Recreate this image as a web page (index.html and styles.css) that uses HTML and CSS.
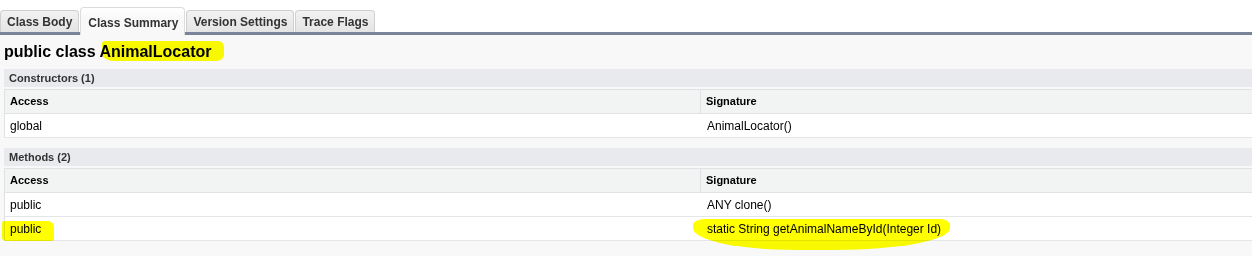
FILE: index.html
```html
<!DOCTYPE html>
<html>
<head>
<meta charset="utf-8">
<link rel="stylesheet" href="styles.css">
</head>
<body>
<div class="tabs">
  <div class="tab">Class Body</div>
  <div class="tab active">Class Summary</div>
  <div class="tab">Version Settings</div>
  <div class="tab">Trace Flags</div>
</div>
<div class="content">
  <h2 class="title">public class <span class="hl hl-title">AnimalLocator</span></h2>

  <div class="section">Constructors (1)</div>
  <div class="table">
    <div class="row head"><div class="cell c1">Access</div><div class="cell">Signature</div></div>
    <div class="row"><div class="cell c1">global</div><div class="cell">AnimalLocator()</div></div>
  </div>

  <div class="section gap">Methods (2)</div>
  <div class="table">
    <div class="row head"><div class="cell c1">Access</div><div class="cell">Signature</div></div>
    <div class="row"><div class="cell c1">public</div><div class="cell">ANY clone()</div></div>
    <div class="row"><div class="cell c1"><span class="hl hl-pub">public</span></div><div class="cell"><span class="hl hl-sig">static String getAnimalNameById(Integer Id)</span></div></div>
  </div>
</div>
</body>
</html>
```
FILE: styles.css
```css
html {
  overflow: hidden;
  background: #f8f8f8;
}

body {
  margin: 0;
  padding: 0;
  min-height: 256px;
  background: #f8f8f8;
  font-family: "Liberation Sans", Arial, sans-serif;
  color: #000;
}

.tabs {
  display: flex;
  align-items: flex-end;
  height: 32px;
  background: #fff;
  border-bottom: 3px solid #7b8399;
}

.tab {
  box-sizing: border-box;
  height: 22px;
  padding: 1px 6px 0 6px;
  margin-right: 1px;
  border: 1px solid #cfcfcf;
  border-bottom: none;
  border-radius: 4px 4px 0 0;
  background: linear-gradient(#f2f2f2, #e4e4e4);
  font-size: 12px;
  font-weight: bold;
  line-height: 20px;
  color: #333;
  white-space: nowrap;
}

.tab.active {
  height: 28px;
  margin-bottom: -3px;
  padding-top: 5px;
  background: linear-gradient(#ffffff, #f8f8f8 40%);
  border-color: #dcdcdc;
  position: relative;
  z-index: 1;
  padding-left: 7px;
  padding-right: 6px;
}

.content {
  padding: 7px 0 0 4px;
}

.title {
  margin: 0 0 7px 0;
  font-size: 16px;
  font-weight: bold;
  line-height: 20px;
  color: #000;
}

.section {
  height: 18px;
  line-height: 18px;
  padding-left: 5px;
  background: #e9eaee;
  font-size: 11px;
  font-weight: bold;
  color: #333;
  margin-bottom: 2px;
}

.section.gap {
  margin-top: 10px;
}

.table {
  border: 1px solid #dfe2e4;
  border-right: none;
  border-bottom: none;
  background: #fff;
  margin-right: -10px;
}

.row {
  display: grid;
  grid-template-columns: 696px 1fr;
  height: 24px;
  box-sizing: border-box;
  border-bottom: 1px solid #e3e5e6;
}

.row.head {
  background: #f2f3f3;
  border-bottom: 1px solid #e0e3e5;
}

.cell {
  padding-left: 5px;
  padding-top: 1px;
  font-size: 12px;
  line-height: 23px;
  color: #000;
  white-space: nowrap;
}

.row.head .cell {
  padding-top: 0;
  font-size: 11px;
  font-weight: bold;
  line-height: 23px;
}

.row.head .c1 {
  border-right: 1px solid #e0e3e5;
}

.row:not(.head) .c1 + .cell {
  padding-left: 6px;
}

.hl {
  position: relative;
}

.hl::after {
  content: "";
  position: absolute;
  background: #ffff00;
  mix-blend-mode: multiply;
  pointer-events: none;
}

.hl-title::after {
  left: 3px;
  right: -13px;
  top: -2px;
  bottom: -1px;
  border-radius: 3px 6px 8px 12px / 3px 6px 6px 8px;
}

.hl-pub::after {
  left: -8px;
  right: -13px;
  top: -1px;
  bottom: -5px;
  border-radius: 2px 6px 3px 4px;
}

.hl-sig::after {
  left: -14px;
  right: -9px;
  top: -3px;
  bottom: -14px;
  border-radius: 12px 10px 45% 40% / 6px 6px 70% 70%;
}
```
